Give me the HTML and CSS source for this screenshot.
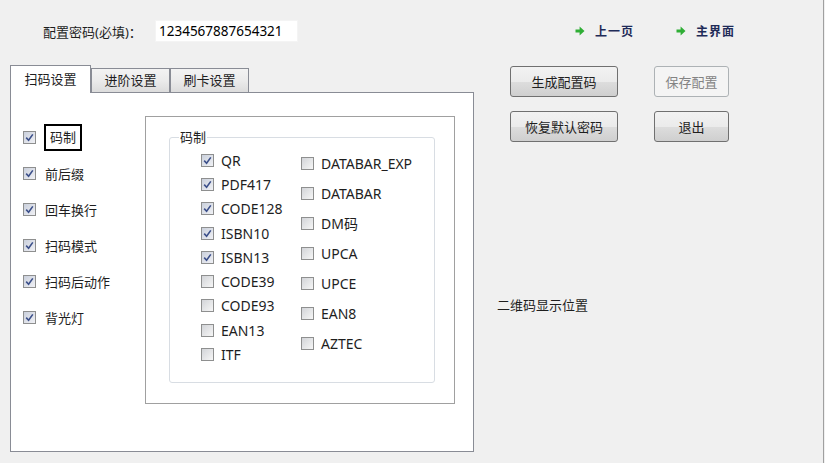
FILE: index.html
```html
<!DOCTYPE html>
<html>
    <head>
        <meta charset="utf-8">
        <title>配置</title>
        <link rel="stylesheet" href="styles.css">
    </head>
    <body>
        <div class='window'>
            <div class='left'>
                <div class='pwdRow'>
                    <span class='pwdLabel'>配置密码(必填)：</span>
                    <input class='pwdInput' type='text' value='1234567887654321'>
                </div>

                <div class='tabs'>
                    <div class='tab selected'>扫码设置</div>
                    <div class='tab'>进阶设置</div>
                    <div class='tab'>刷卡设置</div>
                </div>

                <div class='pane'>
                    <div class='opts'>
                        <div class='opt'><span class='cb on'><svg viewBox='0 0 11 11'><path d='M2.2 5.6 L4.6 8.2 L8.8 2.4'/></svg></span><span class='txt focus'>码制</span></div>
                        <div class='opt'><span class='cb on'><svg viewBox='0 0 11 11'><path d='M2.2 5.6 L4.6 8.2 L8.8 2.4'/></svg></span><span class='txt'>前后缀</span></div>
                        <div class='opt'><span class='cb on'><svg viewBox='0 0 11 11'><path d='M2.2 5.6 L4.6 8.2 L8.8 2.4'/></svg></span><span class='txt'>回车换行</span></div>
                        <div class='opt'><span class='cb on'><svg viewBox='0 0 11 11'><path d='M2.2 5.6 L4.6 8.2 L8.8 2.4'/></svg></span><span class='txt'>扫码模式</span></div>
                        <div class='opt'><span class='cb on'><svg viewBox='0 0 11 11'><path d='M2.2 5.6 L4.6 8.2 L8.8 2.4'/></svg></span><span class='txt'>扫码后动作</span></div>
                        <div class='opt'><span class='cb on'><svg viewBox='0 0 11 11'><path d='M2.2 5.6 L4.6 8.2 L8.8 2.4'/></svg></span><span class='txt'>背光灯</span></div>
                    </div>

                    <div class='box'>
                        <fieldset class='group'>
                            <legend>码制</legend>
                            <div class='cols'>
                                <div class='col col1'>
                                    <div class='code'><span class='cb on'><svg viewBox='0 0 11 11'><path d='M2.2 5.6 L4.6 8.2 L8.8 2.4'/></svg></span>QR</div>
                                    <div class='code'><span class='cb on'><svg viewBox='0 0 11 11'><path d='M2.2 5.6 L4.6 8.2 L8.8 2.4'/></svg></span>PDF417</div>
                                    <div class='code'><span class='cb on'><svg viewBox='0 0 11 11'><path d='M2.2 5.6 L4.6 8.2 L8.8 2.4'/></svg></span>CODE128</div>
                                    <div class='code'><span class='cb on'><svg viewBox='0 0 11 11'><path d='M2.2 5.6 L4.6 8.2 L8.8 2.4'/></svg></span>ISBN10</div>
                                    <div class='code'><span class='cb on'><svg viewBox='0 0 11 11'><path d='M2.2 5.6 L4.6 8.2 L8.8 2.4'/></svg></span>ISBN13</div>
                                    <div class='code'><span class='cb'></span>CODE39</div>
                                    <div class='code'><span class='cb'></span>CODE93</div>
                                    <div class='code'><span class='cb'></span>EAN13</div>
                                    <div class='code'><span class='cb'></span>ITF</div>
                                </div>
                                <div class='col col2'>
                                    <div class='code'><span class='cb'></span>DATABAR_EXP</div>
                                    <div class='code'><span class='cb'></span>DATABAR</div>
                                    <div class='code'><span class='cb'></span>DM码</div>
                                    <div class='code'><span class='cb'></span>UPCA</div>
                                    <div class='code'><span class='cb'></span>UPCE</div>
                                    <div class='code'><span class='cb'></span>EAN8</div>
                                    <div class='code'><span class='cb'></span>AZTEC</div>
                                </div>
                            </div>
                        </fieldset>
                    </div>
                </div>
            </div>

            <div class='right'>
                <div class='links'>
                    <a class='link' href='#'><svg class='arrow' viewBox='0 0 10 10'><path d='M0.5 3.4 H4.6 V0.4 L9.5 5 L4.6 9.6 V6.6 H0.5 Z'/></svg>上一页</a>
                    <a class='link' href='#'><svg class='arrow' viewBox='0 0 10 10'><path d='M0.5 3.4 H4.6 V0.4 L9.5 5 L4.6 9.6 V6.6 H0.5 Z'/></svg>主界面</a>
                </div>

                <div class='btns'>
                    <button class='btn'>生成配置码</button>
                    <button class='btn' disabled>保存配置</button>
                    <button class='btn'>恢复默认密码</button>
                    <button class='btn'>退出</button>
                </div>

                <div class='qrLabel'>二维码显示位置</div>
            </div>
        </div>
    </body>
</html>
```

FILE: styles.css
```css
body
{
    margin: 0px;
    background-color: #f0f0f0;
    font-family: "Noto Sans", "Noto Sans CJK SC", sans-serif;
    font-size: 13px;
    color: #000;
}

.window
{
    display: flex;
    width: 823px;
    height: 463px;
    border-right: 1px solid #a0a0a0;
}

.left
{
    margin-left: 10px;
    width: 464px;
}

/* password row */
.pwdRow
{
    display: flex;
    align-items: center;
    padding-top: 20px;
    padding-left: 33px;
    height: 22px;
}

.pwdLabel
{
    width: 112px;
    color: #1e1e1e;
}

.pwdInput
{
    width: 143px;
    height: 22px;
    box-sizing: border-box;
    border: 1px solid #f4f4f4;
    background: #fff;
    padding: 0px 0px 0px 3px;
    font-family: "Noto Sans", "Noto Sans CJK SC", sans-serif;
    font-size: 13.5px;
    color: #000;
    outline: none;
}

/* tabs */
.tabs
{
    display: flex;
    align-items: flex-end;
    margin-top: 23px;
    height: 27px;
}

.tab
{
    width: 79px;
    height: 24px;
    box-sizing: border-box;
    border: 1px solid #898c95;
    border-bottom: none;
    background: linear-gradient(#f3f3f3, #ebebeb 50%, #dcdcdc);
    text-align: center;
    line-height: 22px;
    color: #1e1e1e;
}

.tab.selected
{
    width: 81px;
    height: 28px;
    margin-bottom: -1px;
    background: #fff;
    line-height: 26px;
    position: relative;
    z-index: 1;
}

.pane
{
    display: flex;
    height: 360px;
    box-sizing: border-box;
    border: 1px solid #898c95;
    background-color: #fff;
}

.opts
{
    margin-top: 26px;
    margin-left: 12px;
    width: 122px;
}

.opt
{
    display: flex;
    align-items: center;
    height: 36px;
}

.opt .txt
{
    margin-left: 9px;
    color: #1e1e1e;
}

.opt .txt.focus
{
    margin-left: 8px;
    border: 2px solid #000;
    padding: 0px 4px;
    line-height: 23px;
}

/* checkbox */
.cb
{
    flex: none;
    display: flex;
    width: 13px;
    height: 13px;
    box-sizing: border-box;
    border: 1px solid #8e8f8f;
    background: linear-gradient(135deg, #d2d4d8, #f6f6f6);
}

.cb.on
{
    background: linear-gradient(135deg, #cad0dc, #f0f1f5);
}

.cb svg
{
    width: 11px;
    height: 11px;
}

.cb path
{
    fill: none;
    stroke: #3b4f8a;
    stroke-width: 1.6;
}

/* codes box */
.box
{
    width: 310px;
    height: 288px;
    box-sizing: border-box;
    margin-top: 23px;
    border: 1px solid #a0a0a0;
}

.group
{
    margin: 12px 0px 0px 23px;
    width: 266px;
    height: 254px;
    box-sizing: border-box;
    padding: 0px;
    border: 1px solid #d8dde3;
    border-radius: 3px;
}

.group legend
{
    margin-left: 9px;
    padding: 0px 1px;
    line-height: 17px;
    color: #1e1e1e;
}

.cols
{
    display: flex;
    padding-top: 2px;
    padding-left: 31px;
}

.col1
{
    width: 100px;
}

.code
{
    display: flex;
    align-items: center;
    font-size: 14px;
    color: #1e1e1e;
}

.code .cb
{
    margin-right: 7px;
}

.col1 .code
{
    height: 24.3px;
}

.col2 .code
{
    height: 30px;
}

/* right side */
.right
{
    margin-left: 23px;
    flex: 1;
}

.links
{
    display: flex;
    padding-top: 22px;
    padding-left: 78px;
    height: 17px;
}

.link
{
    display: flex;
    align-items: center;
    font-size: 12px;
    font-weight: bold;
    letter-spacing: 1px;
    color: #1f2b58;
    text-decoration: none;
}

.link + .link
{
    margin-left: 42px;
}

.arrow
{
    width: 10px;
    height: 10px;
    margin-right: 10px;
}

.arrow path
{
    fill: #2fae35;
}

.btns
{
    display: grid;
    grid-template-columns: 108px 75px;
    grid-auto-rows: 31px;
    column-gap: 36px;
    row-gap: 14px;
    margin-top: 27px;
    margin-left: 13px;
}

.btn
{
    border: 1px solid #707070;
    border-radius: 3px;
    background: linear-gradient(#f2f2f2, #ebebeb 50%, #dddddd 51%, #cfcfcf);
    font-family: "Noto Sans", "Noto Sans CJK SC", sans-serif;
    font-size: 13px;
    color: #1e1e1e;
    padding: 0px;
}

.btn:disabled
{
    border-color: #adb2b5;
    background: #f4f4f4;
    color: #838383;
}

.qrLabel
{
    margin-top: 154px;
    line-height: 18px;
    color: #1e1e1e;
}
```
